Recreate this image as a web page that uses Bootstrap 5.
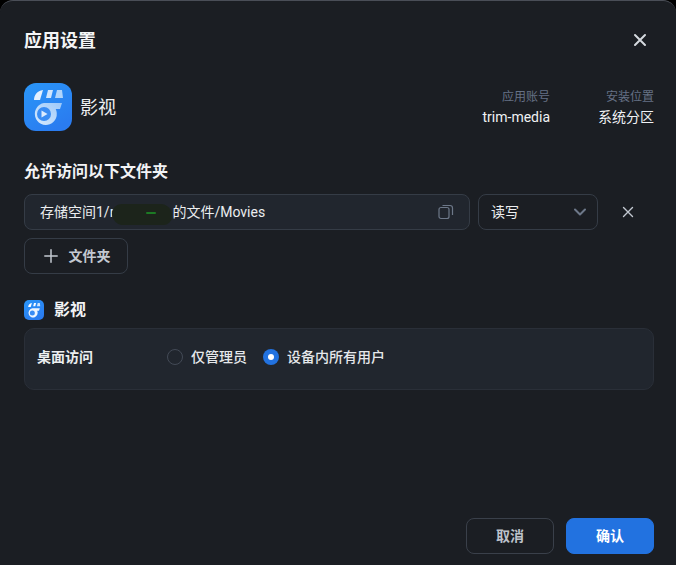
<!DOCTYPE html>
<html lang="zh">
<head>
<meta charset="utf-8">
<link href="https://cdn.jsdelivr.net/npm/bootstrap@5.3.0/dist/css/bootstrap.min.css" rel="stylesheet">
<style>
html,body{height:100%;margin:0;background:#000;}
body{font-family:Roboto,"Noto Sans CJK SC",sans-serif;color:#fff;overflow:hidden;}
.dialog-shell{height:565px;background:#1b1e23;border-top:1px solid #4a4e57;border-radius:13px 13px 0 0;padding:0 22px 11px 24px;display:flex;flex-direction:column;}
.dlg-head{height:80px;padding-top:23px;}
.dlg-title{font-size:18px;font-weight:700;line-height:34px;color:#f4f5f6;margin:0;}
.dlg-close{width:20px;height:20px;margin-right:4px;margin-top:6px;color:#d5d9df;background:none;border:0;padding:0;display:flex;}
.app-row{height:52px;}
.app-name{font-size:18px;line-height:24px;margin:2px 0 0 8px;color:#eef0f2;}
.meta-label{font-size:12px;line-height:20px;color:#667185;}
.meta-value{font-size:14px;line-height:20px;color:#f0f2f4;}
.sect-title{font-size:16px;font-weight:700;line-height:22px;margin:28px 0 11px;color:#f2f3f5;}
.path-box{position:relative;flex:1;height:36px;background:#21262e;border:1px solid #353c46;border-radius:8px;padding:0 15px;font-size:14px;color:#eceef0;line-height:34px;}
.path-copy{position:absolute;right:15px;top:9px;display:flex;}
.scribble{position:absolute;left:87px;top:9px;width:60px;height:21px;background:#1c241b;border-radius:10px 12px 9px 12px;}
.scribble::after{content:"";position:absolute;left:34px;top:8px;width:10px;height:2px;background:#1c7a24;border-radius:1px;}
.scribble-gap{display:inline-block;width:58px;}
.perm-box{width:120px;height:36px;margin-left:8px;border:1px solid #353c46;border-radius:8px;padding:0 11px 0 12px;font-size:14px;line-height:34px;color:#eceef0;}
.row-del{width:20px;margin:0 16px 2px 20px;color:#c3c9d1;background:none;border:0;padding:0;}
.add-btn{width:104px;height:36px;margin-top:8px;border:1px solid #353c46;border-radius:8px;background:none;color:#c3c9d1;font-size:14px;font-weight:700;padding:0 0 0 2px;display:flex;align-items:center;justify-content:center;gap:11px;}
.app-sub{margin-top:25px;height:22px;}
.app-sub-name{font-size:16px;font-weight:700;margin-left:10px;color:#f2f3f5;line-height:22px;}
.access-card{height:62px;margin-top:7px;background:#21262e;border:1px solid #2a2f38;border-radius:10px;padding:0 12px 4px;}
.access-label{width:130px;font-size:14px;font-weight:700;color:#eceef0;}
.radio-dot{width:16px;height:16px;border-radius:50%;border:1px solid #434a56;margin-right:8px;flex:none;}
.radio-dot.is-on{background:#2272e0;border:0;display:flex;align-items:center;justify-content:center;}
.radio-dot.is-on::after{content:"";width:6px;height:6px;border-radius:50%;background:#fff;}
.radio-text{font-size:14px;font-weight:500;color:#e6e8eb;margin-right:16px;line-height:20px;}
.foot-btn{width:88px;height:36px;border-radius:8px;font-size:14px;font-weight:700;padding:0;line-height:34px;}
.foot-cancel{background:none;border:1px solid #3a404a;color:#bcc2ca;margin-right:12px;}
.foot-ok{background:#2272e0;border:1px solid #2272e0;color:#fff;}
</style>
</head>
<body>
<div class="dialog-shell">
  <div class="dlg-head d-flex justify-content-between align-items-start">
    <h1 class="dlg-title">应用设置</h1>
    <button class="dlg-close" aria-label="关闭"><svg width="20" height="20" viewBox="0 0 20 20" fill="none" stroke="currentColor" stroke-width="2" stroke-linecap="round"><path d="M5 5l10 10M15 5L5 15"/></svg></button>
  </div>
  <div class="app-row d-flex align-items-center">
    <svg width="48" height="48" viewBox="0 0 48 48">
      <defs>
        <linearGradient id="g1" x1="0" y1="0" x2="0.6" y2="1"><stop offset="0" stop-color="#2a96f8"/><stop offset="1" stop-color="#2a7cf0"/></linearGradient>
        <linearGradient id="g2" x1="0" y1="1" x2="1" y2="0"><stop offset="0" stop-color="#d8eafd"/><stop offset="1" stop-color="#9cc8f9"/></linearGradient>
      </defs>
      <rect width="48" height="48" rx="12" fill="url(#g1)"/>
      <path d="M10 17c0-5 3-9 9-10l-3 10z" fill="#e4f0fe"/>
      <path d="M24 7h5l-2 8h-5z" fill="#cfe5fd"/>
      <path d="M33 7h5l1 8h-8z" fill="#b0d5fb"/>
      <path d="M20 20h18l-2 6h-4.300a11 11 0 1 1-11.700-6z" fill="url(#g2)"/>
      <circle cx="20" cy="31" r="7" fill="#3a8df4"/>
      <path d="M17.500 27.500v7l6-3.500z" fill="#dcecfe"/>
    </svg>
    <span class="app-name">影视</span>
    <div class="ms-auto text-end">
      <div class="meta-label">应用账号</div>
      <div class="meta-value">trim-media</div>
    </div>
    <div class="text-end" style="margin-left:48px">
      <div class="meta-label">安装位置</div>
      <div class="meta-value">系统分区</div>
    </div>
  </div>
  <h2 class="sect-title">允许访问以下文件夹</h2>
  <div class="d-flex">
    <div class="path-box">
      存储空间1/r<span class="scribble-gap"></span>的文件/Movies
      <span class="scribble"></span>
      <span class="path-copy"><svg width="16" height="16" viewBox="0 0 16 16" fill="none" stroke="#6d7889" stroke-width="1.200"><rect x="1" y="3.500" width="10" height="11" rx="2"/><path d="M4.500 1.500h7.500a2.500 2.500 0 0 1 2.500 2.500v7"/></svg></span>
    </div>
    <div class="perm-box d-flex justify-content-between align-items-center">
      <span>读写</span>
      <svg width="12" height="8" viewBox="0 0 12 8" fill="none" stroke="#6d7889" stroke-width="2" stroke-linecap="round" stroke-linejoin="round"><path d="M1 1.500l5 5 5-5"/></svg>
    </div>
    <button class="row-del" aria-label="删除"><svg width="12" height="12" viewBox="0 0 12 12" fill="none" stroke="currentColor" stroke-width="1.400" stroke-linecap="round"><path d="M1.500 1.500l9 9M10.500 1.500l-9 9"/></svg></button>
  </div>
  <button class="add-btn"><svg width="14" height="14" viewBox="0 0 14 14" stroke="currentColor" stroke-width="1.500" stroke-linecap="round"><path d="M7 .8v12.400M.8 7h12.400"/></svg><span>文件夹</span></button>
  <div class="app-sub d-flex align-items-center">
    <svg width="20" height="20" viewBox="0 0 48 48">
      <rect width="48" height="48" rx="12" fill="url(#g1)"/>
      <path d="M10 17c0-5 3-9 9-10l-3 10z" fill="#fff"/>
      <path d="M24 7h5l-2 8h-5z" fill="#fff"/>
      <path d="M33 7h5l1 8h-8z" fill="#cfe6fd"/>
      <path d="M20 20h18l-2 6h-4.300a11 11 0 1 1-11.700-6z" fill="#eef6ff"/>
      <circle cx="20" cy="31" r="6" fill="#3a8df4"/>
    </svg>
    <span class="app-sub-name">影视</span>
  </div>
  <div class="access-card d-flex align-items-center">
    <div class="access-label">桌面访问</div>
    <span class="radio-dot"></span><span class="radio-text">仅管理员</span>
    <span class="radio-dot is-on"></span><span class="radio-text">设备内所有用户</span>
  </div>
  <div class="mt-auto d-flex justify-content-end">
    <button class="foot-btn foot-cancel">取消</button>
    <button class="foot-btn foot-ok">确认</button>
  </div>
</div>
<script src="https://cdn.jsdelivr.net/npm/bootstrap@5.3.0/dist/js/bootstrap.bundle.min.js"></script>
</body>
</html>
